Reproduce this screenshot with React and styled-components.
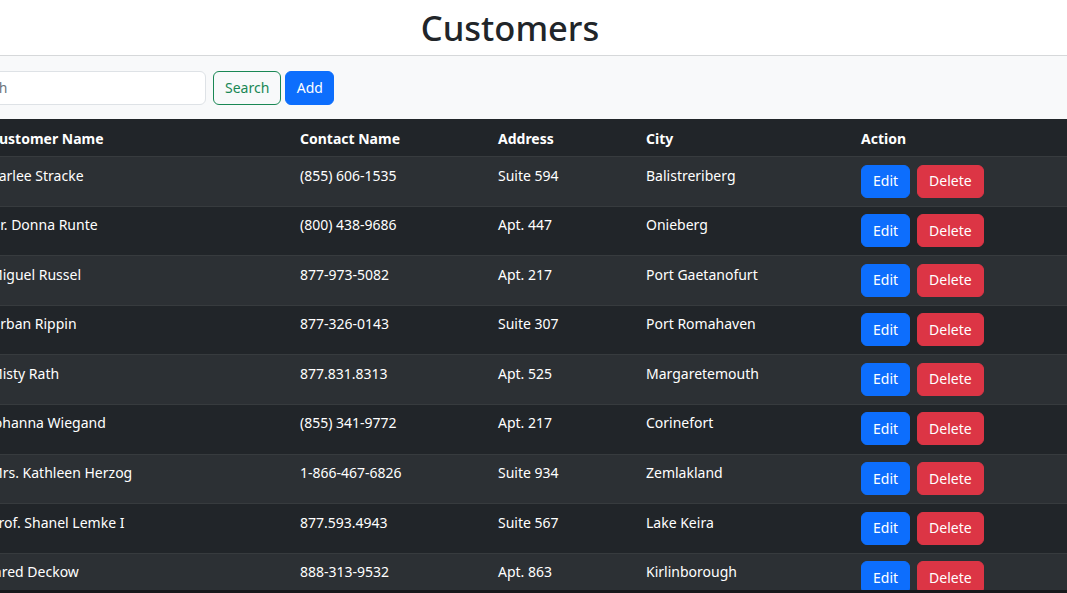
import React from "react";
import styled, { createGlobalStyle } from "styled-components";

const GlobalStyle = createGlobalStyle`
  html {
    background: #17191c;
  }
  body {
    margin: 0;
    font-family: "Noto Sans", "Open Sans", sans-serif;
    overflow: hidden;
  }
  #root {
    height: 590px;
    overflow: hidden;
    background: #fff;
  }
`;

const Page = styled.div`
  margin-left: -50px;
  width: 1160px;
`;

const Title = styled.h1`
  margin: 0;
  height: 55px;
  padding-right: 40px;
  display: flex;
  align-items: center;
  justify-content: center;
  font-size: 34.5px;
  font-weight: 500;
  color: #212529;
  border-bottom: 1px solid #d6d8da;
`;

const Toolbar = styled.div`
  display: flex;
  align-items: center;
  height: 63px;
  background: #f8f9fa;
`;

const SearchInput = styled.input`
  box-sizing: border-box;
  width: 256px;
  height: 34px;
  padding: 0 12px;
  border: 1px solid #dee2e6;
  border-radius: 6px;
  font: inherit;
  font-size: 14px;
  color: #212529;
  background: #fff;
  outline: none;
  &::placeholder {
    color: #6c757d;
  }
`;

const Button = styled.button`
  box-sizing: border-box;
  height: ${props => props.h || 34}px;
  padding: 0 ${props => props.px || 11}px;
  margin-left: ${props => props.gap || 0}px;
  border-radius: 6px;
  font: inherit;
  font-size: 14px;
  cursor: pointer;
  border: 1px solid ${props => props.color};
  background: ${props => (props.outline ? "transparent" : props.color)};
  color: ${props => (props.outline ? props.color : "#fff")};
`;

const Table = styled.table`
  margin-left: 32px;
  width: 1128px;
  table-layout: fixed;
  border-collapse: collapse;
  font-size: 14px;
  color: #fff;
`;

const Th = styled.th`
  width: ${props => props.w - 16}px;
  height: 31px;
  padding: 0 8px 6px;
  vertical-align: bottom;
  line-height: 22px;
  text-align: left;
  font-weight: 700;
  background: #212529;
  border-bottom: 1px solid #373b3e;
`;

const Row = styled.tr`
  background: ${props => (props.odd ? "#2c3034" : "#212529")};
  border-bottom: 1px solid #373b3e;
`;

const Td = styled.td`
  vertical-align: top;
  padding: 7.5px 8px 8.1px;
  line-height: 22px;
  white-space: nowrap;
`;

const Actions = styled.div`
  display: flex;
  gap: 7px;
`;

const customers = [
  ["Karlee Stracke", "(855) 606-1535", "Suite 594", "Balistreriberg"],
  ["Dr. Donna Runte", "(800) 438-9686", "Apt. 447", "Onieberg"],
  ["Miguel Russel", "877-973-5082", "Apt. 217", "Port Gaetanofurt"],
  ["Urban Rippin", "877-326-0143", "Suite 307", "Port Romahaven"],
  ["Misty Rath", "877.831.8313", "Apt. 525", "Margaretemouth"],
  ["Johanna Wiegand", "(855) 341-9772", "Apt. 217", "Corinefort"],
  ["Mrs. Kathleen Herzog", "1-866-467-6826", "Suite 934", "Zemlakland"],
  ["Prof. Shanel Lemke I", "877.593.4943", "Suite 567", "Lake Keira"],
  ["Jared Deckow", "888-313-9532", "Apt. 863", "Kirlinborough"],
];

export default function App() {
  return (
    <>
      <GlobalStyle />
      <Page>
        <Title>Customers</Title>
        <Toolbar>
          <SearchInput placeholder="Search" />
          <Button outline color="#198754" gap={7}>
            Search
          </Button>
          <Button color="#0d6efd" gap={4} px={10.5}>
            Add
          </Button>
        </Toolbar>
        <Table>
          <thead>
            <tr>
              <Th w={310}>Customer Name</Th>
              <Th w={198}>Contact Name</Th>
              <Th w={148}>Address</Th>
              <Th w={215}>City</Th>
              <Th w={257}>Action</Th>
            </tr>
          </thead>
          <tbody>
            {customers.map((c, i) => (
              <Row key={i} odd={i % 2 === 0}>
                <Td>{c[0]}</Td>
                <Td>{c[1]}</Td>
                <Td>{c[2]}</Td>
                <Td>{c[3]}</Td>
                <Td>
                  <Actions>
                    <Button color="#0d6efd" h={33}>
                      Edit
                    </Button>
                    <Button color="#dc3545" h={33}>
                      Delete
                    </Button>
                  </Actions>
                </Td>
              </Row>
            ))}
          </tbody>
        </Table>
      </Page>
    </>
  );
}
